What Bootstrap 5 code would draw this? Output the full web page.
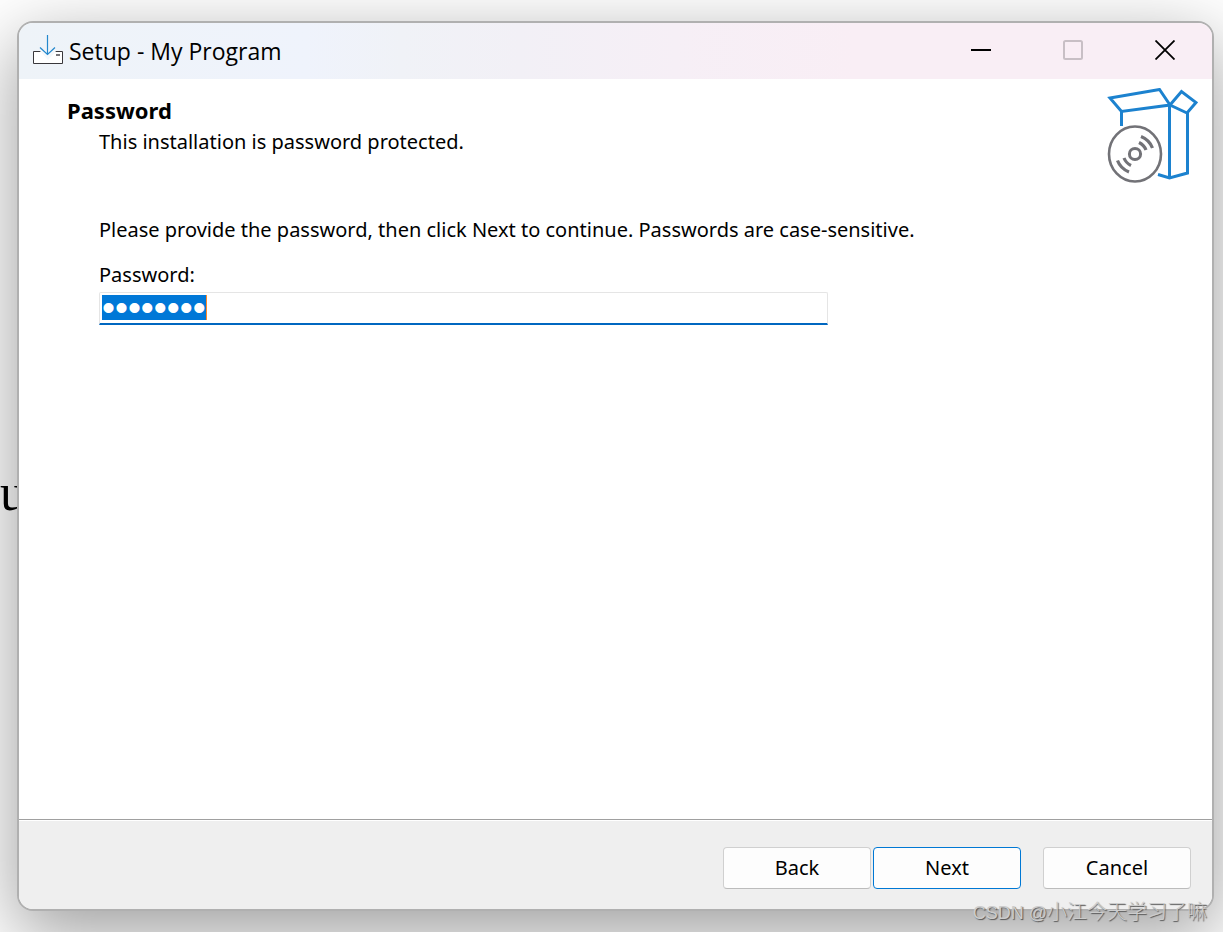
<!DOCTYPE html>
<html lang="en">
<head>
<meta charset="utf-8">
<meta name="viewport" content="width=device-width, initial-scale=1">
<title>Setup - My Program</title>
<link href="https://cdn.jsdelivr.net/npm/bootstrap@5.3.0/dist/css/bootstrap.min.css" rel="stylesheet">
<style>
  body { font-family: "Noto Sans", "Open Sans", sans-serif; font-size: 20px; line-height: 32px; color: #000; background: #fff; padding: 21px 9px 21px 17px; }
  .setup-window { border: 2px solid #b0b0b0; border-radius: 16px; background: #fff; box-shadow: 0 22px 72px 2px rgba(0,0,0,.38); }
  .title-bar { height: 56px; padding-left: 14px; border-radius: 14px 14px 0 0; background: linear-gradient(90deg, #eef3f8 0%, #eff3fc 24%, #f0f2f7 32%, #f2f0f6 42%, #f6eff6 55%, #f9eef5 70%); }
  .title-bar .setup-icon { margin-bottom: 2px; }
  .title-text { font-family: "Open Sans", sans-serif; font-size: 23px; padding-left: 6px; }
  .caption-btn { width: 92px; height: 56px; border: 0; background: none; padding: 0 2px 2px 0; }
  .wizard-head { padding: 9px 14px 0 48px; }
  .wizard-head h1 { font-size: 22px; line-height: 32px; margin: 6px 0 0; font-weight: 700; }
  .wizard-head p { margin: 0 0 0 32px; }
  .wizard-page { padding: 30px 80px 0; }
  .intro { margin-bottom: 13px; }
  .password-box { max-width: 729px; height: 33px; margin-top: 1px; padding: 2px 2px 3px; border: 1px solid #e5e5e5; border-bottom: 2px solid #0067c0; border-radius: 2px 2px 0 0; }
  .password-field { height: 25px; padding: 0; border: 0; font-family: "Liberation Sans", sans-serif; font-size: 37px; line-height: 25px; color: #000; background: #fff; outline: 0; }
  .password-field::selection { background: #0078d7; color: #fff; }
  .caret-mark { left: 106px; top: 2px; width: 1px; height: 25px; background: #ff8728; }
  .wizard-foot { padding: 27px 21px 20px; background: #efefef; border-top: 1px solid #a0a0a0; box-shadow: inset 0 1px #fff; border-radius: 0 0 14px 14px; }
  .wizard-btn { width: 148px; height: 42px; border: 1px solid #d0d0d0; border-bottom-color: #bcbcbc; border-radius: 4px; background: #fdfdfd; color: #000; padding: 0; }
  .wizard-btn.is-default { border-color: #0078d4; margin: 0 22px 0 2px; }
  .behind-letter { left: 0; top: 465px; font-family: "Liberation Serif", serif; font-size: 52px; line-height: 56px; }
  .credit { right: 16px; bottom: 3px; font: 20px/32px "Liberation Sans", "Noto Sans CJK SC", sans-serif; font-weight: 300; color: #ccc; text-shadow: 1px 1px 1px #555; pointer-events: none; }
  .credit span { font-size: 18px; }
</style>
</head>
<body class="d-flex flex-column min-vh-100 position-relative overflow-hidden">
<span class="behind-letter position-absolute">u</span>
<main class="setup-window d-flex flex-column flex-fill position-relative">
  <header class="title-bar d-flex align-items-center">
    <svg class="setup-icon" width="30" height="30" viewBox="0 0 30 30" fill="none" aria-hidden="true">
      <path d="M.5 16.5h29v12H.5z" fill="#fff" stroke="#39373b"/>
      <path d="M6 15h18l-9 10z" fill="#f4f8fb"/>
      <path d="M23 20h4" stroke="#78767a" stroke-width="2"/>
      <path d="M14.500 0v19M7 12.500l7.500 7 7.500-7" stroke="#2387cd" stroke-width="1.200"/>
    </svg>
    <span class="title-text">Setup - My Program</span>
    <div class="d-flex ms-auto">
      <button type="button" class="caption-btn" aria-label="Minimize"><svg class="d-block mx-auto" width="20" height="20" viewBox="0 0 20 20"><path d="M0 10h20" stroke="#000" stroke-width="2"/></svg></button>
      <button type="button" class="caption-btn" aria-label="Maximize" disabled><svg class="d-block mx-auto" width="20" height="20" viewBox="0 0 20 20"><rect x="1" y="1" width="18" height="18" rx="1.500" fill="none" stroke="#c8bfc5" stroke-width="2"/></svg></button>
      <button type="button" class="caption-btn" aria-label="Close"><svg class="d-block mx-auto" width="20" height="20" viewBox="0 0 20 20"><path d="M.5.5l19 19M19.500.5l-19 19" stroke="#000" stroke-width="1.800"/></svg></button>
    </div>
  </header>
  <div class="wizard-head d-flex justify-content-between">
    <div>
      <h1>Password</h1>
      <p>This installation is password protected.</p>
    </div>
    <svg width="92" height="96" viewBox="0 0 92 96" fill="none" aria-hidden="true">
      <g stroke="#1c82cf" stroke-width="3">
        <path d="M4 10l49.500-8.500L64 17 15.500 23.500z"/>
        <path d="M64 17L75.500 3.500 90 14.500 81 25z"/>
        <path d="M15.500 23v15M63.500 17v74M52 86.500L63.500 90l18-5V24"/>
      </g>
      <g stroke="#727277">
        <ellipse cx="29" cy="66" rx="26" ry="27.500" stroke-width="2.600"/>
        <circle cx="29" cy="66" r="5.600" stroke-width="3"/>
        <path d="M33 54.500q5 2.500 7 7.500M35 48.500q8.500 3.500 11.500 11.500M25 77.500q-5-2.500-7-7.500M23 84q-8.500-3.500-11.500-11.500" stroke-width="3.200"/>
      </g>
    </svg>
  </div>
  <div class="wizard-page flex-fill">
    <p class="intro">Please provide the password, then click Next to continue. Passwords are case-sensitive.</p>
    <label for="password" class="d-block">Password:</label>
    <div class="password-box position-relative">
      <input id="password" class="password-field d-block w-100" type="password" value="setup123" autofocus>
      <span class="caret-mark position-absolute"></span>
    </div>
  </div>
  <footer class="wizard-foot d-flex justify-content-end">
    <button type="button" class="wizard-btn">Back</button>
    <button type="button" class="wizard-btn is-default">Next</button>
    <button type="button" class="wizard-btn">Cancel</button>
  </footer>
</main>
<div class="credit position-absolute"><span>CSDN @</span>小江今天学习了嘛</div>
<script src="https://cdn.jsdelivr.net/npm/bootstrap@5.3.0/dist/js/bootstrap.bundle.min.js"></script>
<script>
  const field = document.getElementById('password');
  field.focus();
  field.select();
</script>
</body>
</html>
